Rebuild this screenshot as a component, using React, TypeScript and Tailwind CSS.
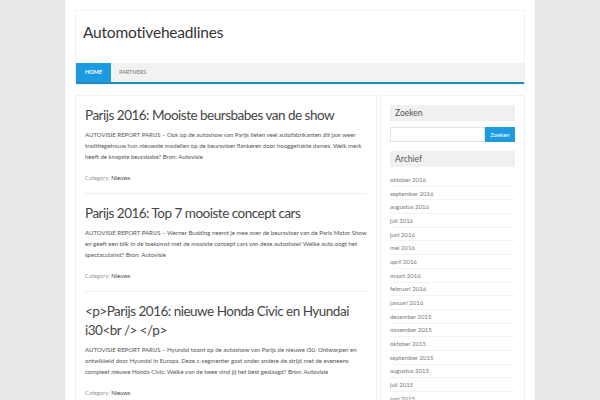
import type { ReactNode } from 'react'

const posts = [
  {
    title: 'Parijs 2016: Mooiste beursbabes van de show',
    text: 'AUTOVISIE REPORT PARIJS – Ook op de autoshow van Parijs lieten veel autofabrikanten dit jaar weer traditiegetrouw hun nieuwste modellen op de beursvloer flankeren door hooggehakte dames. Welk merk heeft de knapste beursbabe? Bron: Autovisie',
  },
  {
    title: 'Parijs 2016: Top 7 mooiste concept cars',
    text: 'AUTOVISIE REPORT PARIJS – Werner Budding neemt je mee over de beursvloer van de Paris Motor Show en geeft een blik in de toekomst met de mooiste concept cars van deze autoshow! Welke auto oogt het spectaculairst? Bron: Autovisie',
  },
  {
    title: '<p>Parijs 2016: nieuwe Honda Civic en Hyundai i30<br /> </p>',
    text: 'AUTOVISIE REPORT PARIJS – Hyundai toont op de autoshow van Parijs de nieuwe i30. Ontworpen en ontwikkeld door Hyundai in Europa. Deze c-segmenter gaat onder andere de strijd met de eveneens compleet nieuwe Honda Civic. Welke van de twee vind jij het best geslaagd? Bron: Autovisie',
  },
]

const archive = [
  'oktober 2016', 'september 2016', 'augustus 2016', 'juli 2016', 'juni 2016', 'mei 2016',
  'april 2016', 'maart 2016', 'februari 2016', 'januari 2016', 'december 2015', 'november 2015',
  'oktober 2015', 'september 2015', 'augustus 2015', 'juli 2015', 'juni 2015',
]

function WidgetTitle({ children }: { children: ReactNode }) {
  return (
    <div className="bg-[#f0f0f0] h-[16px] px-[5px] flex items-center text-[8.5px] text-[#555]">
      {children}
    </div>
  )
}

export default function App() {
  return (
    <div
      className="h-[400px] overflow-hidden bg-[#e9e9e9] flex justify-center"
      style={{ fontFamily: 'Lato, "Liberation Sans", sans-serif' }}
    >
      <div className="w-[470px] bg-white px-[10px] pt-[10px]">
        {/* Header */}
        <div className="border border-[#f2f2f2] h-[75px] flex flex-col">
          <div className="flex-1 pl-[7px] pt-[10px] text-[15.5px] leading-[22px] text-[#333] tracking-[-0.2px]">
            Automotiveheadlines
          </div>
          <div className="h-[21px] bg-[#f2f2f2] border-b-[2px] border-[#1e8cbe] flex items-stretch">
            <div className="bg-[#1e9ae0] text-white text-[5.5px] font-bold px-[9px] flex items-center">HOME</div>
            <div className="text-[#777] text-[5.5px] px-[8px] flex items-center">PARTNERS</div>
          </div>
        </div>

        {/* Body */}
        <div className="flex mt-[10px] gap-[3px]">
          <div className="w-[302px] border border-[#f2f2f2] px-[9px] pt-[10px]">
            {posts.map((p, i) => (
              <div key={i} className={`pb-[10px] ${i > 0 ? 'pt-[10px]' : ''} ${i < posts.length - 1 ? 'border-b border-[#eeeeee]' : ''}`}>
                <h2 className="text-[13.5px] leading-[19px] text-[#444] tracking-[-0.5px]">{p.title}</h2>
                <p className="mt-[4px] text-[6.05px] leading-[11px] text-[#555]">{p.text}</p>
                <p className="mt-[10px] text-[5.8px] leading-[11px] text-[#999]">
                  Category: <span className="text-[#444]">Nieuws</span>
                </p>
              </div>
            ))}
          </div>

          <div className="flex-1 border border-[#f2f2f2] px-[9px] pt-[9px]">
            <WidgetTitle>Zoeken</WidgetTitle>
            <div className="flex mt-[6px] h-[15px]">
              <div className="flex-1 border border-[#e4e4e4]" />
              <div className="w-[30px] bg-[#1e9ae0] text-white text-[6px] flex items-center justify-center">Zoeken</div>
            </div>
            <div className="mt-[9px]">
              <WidgetTitle>Archief</WidgetTitle>
            </div>
            <ul className="mt-[6px]">
              {archive.map((a, i) => (
                <li key={i} className="h-[13.7px] border-b border-[#f3f3f3] flex items-center text-[6px] text-[#777]">
                  {a}
                </li>
              ))}
            </ul>
          </div>
        </div>
      </div>
    </div>
  )
}
